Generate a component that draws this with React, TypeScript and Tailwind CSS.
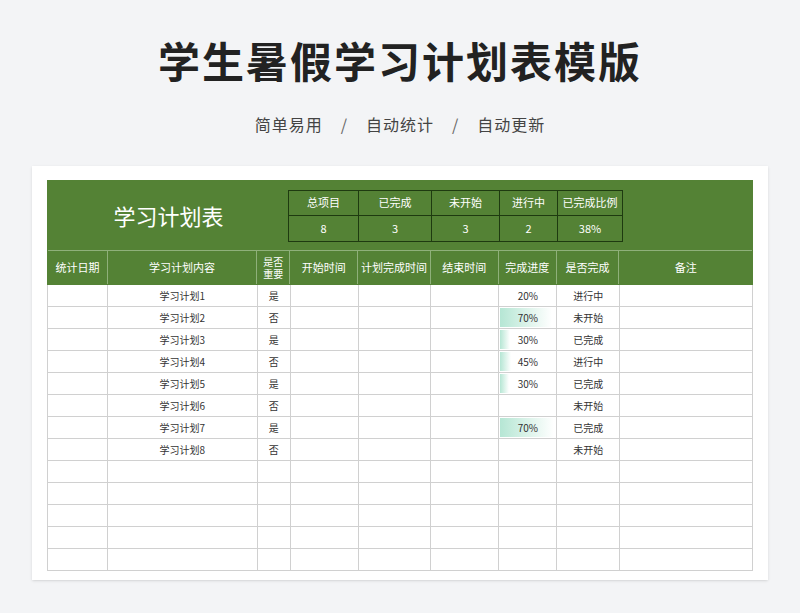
const COLS = [60, 150, 33, 68, 73, 68, 58, 63, 133];
const ROWS: [string, string, number | null, string][] = [
  ["学习计划1", "是", 0, "进行中"],
  ["学习计划2", "否", 52, "未开始"],
  ["学习计划3", "是", 10, "已完成"],
  ["学习计划4", "否", 11, "进行中"],
  ["学习计划5", "是", 9, "已完成"],
  ["学习计划6", "否", null, "未开始"],
  ["学习计划7", "是", 54, "已完成"],
  ["学习计划8", "否", null, "未开始"],
];
const PCT = ["20%", "70%", "30%", "45%", "30%", "", "70%", ""];
const HEAD = ["统计日期", "学习计划内容", "是否重要", "开始时间", "计划完成时间", "结束时间", "完成进度", "是否完成", "备注"];

export default function App() {
  const font = { fontFamily: "'Noto Sans CJK SC', sans-serif" };
  return (
    <div className="w-[800px] h-[613px] bg-[#f3f4f6] flex flex-col items-center" style={font}>
      <h1 className="mt-[34px] text-[42px] leading-[52px] font-bold text-[#222] tracking-[2px]">学生暑假学习计划表模版</h1>
      <p className="mt-[26px] text-[16px] leading-[24px] text-[#444] tracking-[1px]">
        简单易用<span className="mx-[18px] text-[#666]">/</span>自动统计<span className="mx-[18px] text-[#666]">/</span>自动更新
      </p>
      <div className="mt-[30px] w-[736px] h-[414px] bg-white shadow-sm pt-[14px] pl-[15px]">
        <div className="w-[706px] bg-[#548235] border border-[#548235]">
          <div className="h-[69px] flex items-center">
            <div className="w-[241px] text-center text-white text-[22px]">学习计划表</div>
            <div className="grid grid-cols-[70px_73px_68px_58px_64px] border border-[#1e3a10] text-white text-[11px] ml-[-1px]">
              {["总项目", "已完成", "未开始", "进行中", "已完成比例", "8", "3", "3", "2", "38%"].map((t, i) => (
                <div key={i} className={`h-[25px] flex items-center justify-center border-[#1e3a10] ${i % 5 !== 4 ? "border-r" : ""} ${i < 5 ? "border-b" : ""}`}>{t}</div>
              ))}
            </div>
          </div>
          <div className="flex h-[34px] border-t border-[#8fb07a] text-white text-[11px]">
            {HEAD.map((h, i) => (
              <div key={i} style={{ width: COLS[i] }} className={`flex items-center justify-center text-center ${i < 8 ? "border-r border-[#8fb07a]" : ""}`}>
                {i === 2 ? <span className="text-[10px] leading-[12px]">是否<br />重要</span> : h}
              </div>
            ))}
          </div>
        </div>
        <div className="w-[706px] border-l border-[#d0d0d0] text-[10px] text-[#333]">
          {Array.from({ length: 13 }).map((_, r) => {
            const d = ROWS[r];
            return (
              <div key={r} className="flex h-[22px] border-b border-[#d0d0d0]">
                {COLS.map((w, c) => (
                  <div key={c} style={{ width: w }} className="relative flex items-center justify-center border-r border-[#d0d0d0]">
                    {d && c === 6 && d[2] ? (
                      <div className="absolute left-[1px] top-[1px] bottom-[1px] bg-gradient-to-r from-[#b5e6d4] to-white" style={{ width: d[2] }} />
                    ) : null}
                    <span className="relative">
                      {d && (c === 1 ? d[0] : c === 2 ? d[1] : c === 6 ? PCT[r] : c === 7 ? d[3] : "")}
                    </span>
                  </div>
                ))}
              </div>
            );
          })}
        </div>
      </div>
    </div>
  );
}
